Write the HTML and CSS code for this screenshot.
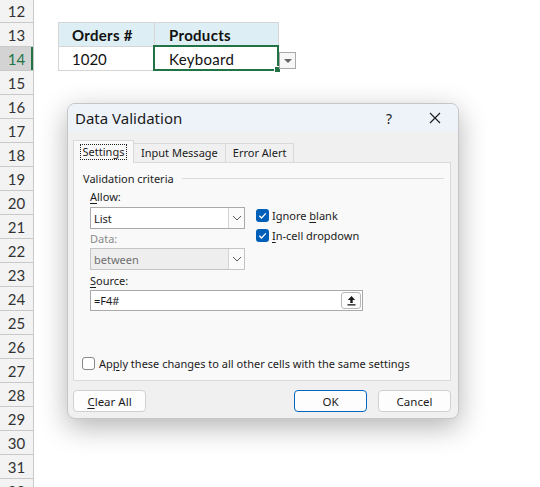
FILE: index.html
```html
<!DOCTYPE html>
<html>
<head>
<meta charset="utf-8">
<link rel="stylesheet" href="styles.css">
</head>
<body>
<div class="sheet">
  <div class="rowhdrs">
    <div class="rh first">12</div>
    <div class="rh">13</div>
    <div class="rh sel">14</div>
    <div class="rh">15</div>
    <div class="rh">16</div>
    <div class="rh">17</div>
    <div class="rh">18</div>
    <div class="rh">19</div>
    <div class="rh">20</div>
    <div class="rh">21</div>
    <div class="rh">22</div>
    <div class="rh">23</div>
    <div class="rh">24</div>
    <div class="rh">25</div>
    <div class="rh">26</div>
    <div class="rh">27</div>
    <div class="rh">28</div>
    <div class="rh">29</div>
    <div class="rh">30</div>
    <div class="rh">31</div>
    <div class="rh">32</div>
  </div>
  <div class="cells">
    <div class="tbl">
      <div class="c hd c1">Orders #</div>
      <div class="c hd c2">Products</div>
      <div class="c c1">1020</div>
      <div class="c c2">Keyboard</div>
      <div class="selbox"><span class="handle"></span></div>
      <div class="ddbtn"><span class="tri"></span></div>
    </div>
  </div>

  <div class="dlg">
    <div class="titlebar">
      <span class="title">Data Validation</span>
      <span class="tbtn">?</span>
      <span class="tbtn">
        <svg width="12" height="12" viewBox="0 0 12 12"><path d="M1 1L11 11M11 1L1 11" stroke="#1a1a1a" stroke-width="1.1" fill="none"/></svg>
      </span>
    </div>
    <div class="content">
      <div class="tabs">
        <div class="tab active"><span class="focus">Settings</span></div>
        <div class="tab">Input Message</div>
        <div class="tab">Error Alert</div>
      </div>
      <div class="panel">
        <div class="legend"><span>Validation criteria</span><span class="rule"></span></div>
        <div class="crit">
          <div class="row1">
            <div class="colL">
              <div class="lbl"><u>A</u>llow:</div>
              <div class="select">
                <span class="val">List</span>
                <span class="arrow"><svg width="10" height="6" viewBox="0 0 10 6"><path d="M1 1L5 5L9 1" stroke="#5a5a5a" fill="none" stroke-width="1"/></svg></span>
              </div>
              <div class="lbl dis">Data:</div>
              <div class="select disabled">
                <span class="val">between</span>
                <span class="arrow"><svg width="10" height="6" viewBox="0 0 10 6"><path d="M1 1L5 5L9 1" stroke="#5a5a5a" fill="none" stroke-width="1"/></svg></span>
              </div>
            </div>
            <div class="colR">
              <div class="chk"><span class="cb on"><svg width="13" height="13" viewBox="0 0 13 13"><path d="M3.3 6.8L5.5 9L9.8 4.4" stroke="#fff" stroke-width="1.3" fill="none"/></svg></span><span>Ignore <u>b</u>lank</span></div>
              <div class="chk"><span class="cb on"><svg width="13" height="13" viewBox="0 0 13 13"><path d="M3.3 6.8L5.5 9L9.8 4.4" stroke="#fff" stroke-width="1.3" fill="none"/></svg></span><span><u>I</u>n-cell dropdown</span></div>
            </div>
          </div>
          <div class="lbl src"><u>S</u>ource:</div>
          <div class="input">
            <span class="val">=F4#</span>
            <span class="upbtn"><svg width="11" height="11" viewBox="0 0 11 11"><path d="M5.5 1L1.8 5H4.3V8H6.7V5H9.2Z" fill="#1a1a1a"/><rect x="1.5" y="9.2" width="8" height="1.3" fill="#1a1a1a"/></svg></span>
          </div>
        </div>
        <div class="apply"><span class="cb off"></span><span>Ap<u>p</u>ly these changes to all other cells with the same settings</span></div>
      </div>
      <div class="buttons">
        <div class="btn"><u>C</u>lear All</div>
        <div class="right">
          <div class="btn ok">OK</div>
          <div class="btn">Cancel</div>
        </div>
      </div>
    </div>
  </div>
</div>
</body>
</html>
```

FILE: styles.css
```css
html, body {
  margin: 0;
  padding: 0;
  background: #ffffff;
}

.sheet {
  position: relative;
  width: 540px;
  height: 487px;
  display: flex;
  overflow: hidden;
  font-family: Lato, "Liberation Sans", sans-serif;
}

.rowhdrs {
  width: 34px;
  flex: none;
  box-sizing: border-box;
  background: #f3f3f3;
  border-right: 1px solid #c8c8c8;
  display: flex;
  flex-direction: column;
}

.rh {
  height: 24px;
  flex: none;
  box-sizing: border-box;
  border-bottom: 1px solid #c8c8c8;
  display: flex;
  align-items: center;
  justify-content: center;
  font-size: 15px;
  color: #333333;
}

.rh.first {
  height: 23px;
}

.rh.sel {
  background: #d3d3d3;
  color: #217346;
  box-shadow: inset -2px 0 0 #217346;
}

.cells {
  flex: 1;
  padding: 22px 0 0 24px;
}

.tbl {
  position: relative;
  display: grid;
  grid-template-columns: 95px 123px;
  grid-auto-rows: 23px;
  gap: 1px;
  padding: 1px;
  background: #d6d6d6;
  width: max-content;
}

.c {
  background: #ffffff;
  display: flex;
  align-items: center;
  font-size: 15px;
  color: #111111;
}

.c.c1 {
  padding-left: 13px;
}

.c.c2 {
  padding-left: 14px;
  letter-spacing: 0.3px;
}

.c.hd {
  background: #ddeff5;
  font-weight: bold;
  letter-spacing: 0.3px;
}

.selbox {
  position: absolute;
  left: 95px;
  top: 23px;
  width: 126px;
  height: 26px;
  box-sizing: border-box;
  border: 2px solid #217346;
}

.handle {
  position: absolute;
  right: -4px;
  bottom: -4px;
  width: 5px;
  height: 5px;
  background: #217346;
  border: 1px solid #ffffff;
}

.ddbtn {
  position: absolute;
  left: 221px;
  top: 30px;
  width: 17px;
  height: 17px;
  box-sizing: border-box;
  border: 1px solid #aaaaaa;
  background: #f7f7f7;
  display: flex;
  align-items: center;
  justify-content: center;
}

.tri {
  width: 0;
  height: 0;
  border-left: 4px solid transparent;
  border-right: 4px solid transparent;
  border-top: 4px solid #666666;
}

/* dialog */
.dlg {
  position: absolute;
  left: 67px;
  top: 103px;
  width: 392px;
  height: 316px;
  box-sizing: border-box;
  background: #f0f0f0;
  border: 1px solid #c6c6c6;
  border-radius: 8px;
  box-shadow: 0 8px 28px rgba(0, 0, 0, 0.3);
  overflow: hidden;
  display: flex;
  flex-direction: column;
  font-family: "Noto Sans", "Open Sans", sans-serif;
  font-size: 11px;
  color: #1b1b1b;
}

.titlebar {
  height: 28px;
  flex: none;
  background: #eef3fa;
  display: flex;
  align-items: center;
  padding-left: 7px;
}

.title {
  flex: 1;
  font-size: 15px;
  color: #1a1a1a;
}

.tbtn {
  width: 46px;
  height: 28px;
  display: flex;
  align-items: center;
  justify-content: center;
  font-size: 14px;
}

.content {
  padding: 8px 7px 0 5px;
}

.tabs {
  height: 22px;
  display: flex;
  align-items: flex-end;
}

.tab {
  height: 19px;
  box-sizing: border-box;
  padding: 0 7px;
  border: 1px solid #d9d9d9;
  border-bottom: none;
  border-left: none;
  background: #f0f0f0;
  display: flex;
  align-items: center;
  line-height: 14px;
}

.tab.active {
  height: 23px;
  margin-bottom: -1px;
  padding: 0 2px;
  border-left: 1px solid #d9d9d9;
  background: #f9f9f9;
  position: relative;
  z-index: 1;
  width: 61px;
  justify-content: center;
}

.focus {
  outline: 1px dotted #222222;
  padding: 0 2px;
}

.panel {
  height: 219px;
  box-sizing: border-box;
  background: #f9f9f9;
  border: 1px solid #dadada;
  display: flex;
  flex-direction: column;
}

.legend {
  display: flex;
  align-items: center;
  margin-top: 7px;
  padding-left: 9px;
  padding-right: 6px;
  height: 16px;
}

.rule {
  flex: 1;
  height: 1px;
  background: #dcdcdc;
  margin-left: 8px;
}

.crit {
  padding-left: 16px;
  margin-top: 3px;
}

.row1 {
  display: flex;
  gap: 11px;
}

.colL {
  width: 155px;
}

.lbl {
  height: 16px;
  line-height: 16px;
}

.lbl.dis {
  color: #8a8a8a;
  margin-top: 2px;
}

.select {
  height: 22px;
  margin-top: 2px;
  box-sizing: border-box;
  border: 1px solid #a9a9a9;
  background: #ffffff;
  display: flex;
  align-items: center;
}

.select.disabled {
  background: #eeeeee;
  border-color: #c4c4c4;
  color: #6e6e6e;
  margin-top: 1px;
}

.val {
  flex: 1;
  padding-left: 3px;
}

.arrow {
  width: 16px;
  height: 20px;
  box-sizing: border-box;
  border-left: 1px solid #d4d4d4;
  background: #fbfbfb;
  display: flex;
  align-items: center;
  justify-content: center;
}

.colR {
  padding-top: 16px;
}

.chk {
  height: 20px;
  display: flex;
  align-items: center;
  gap: 3px;
}

.cb {
  width: 13px;
  height: 13px;
  box-sizing: border-box;
  border-radius: 3px;
  flex: none;
  display: flex;
}

.cb.on {
  background: #005fb8;
}

.cb.off {
  background: #ffffff;
  border: 1px solid #888888;
}

.lbl.src {
  margin-top: 3px;
}

.input {
  width: 273px;
  height: 21px;
  margin-top: 1px;
  box-sizing: border-box;
  border: 1px solid #a9a9a9;
  background: #ffffff;
  display: flex;
  align-items: center;
  padding-right: 1px;
}

.upbtn {
  width: 20px;
  height: 17px;
  box-sizing: border-box;
  border: 1px solid #b8b8b8;
  border-radius: 3px;
  background: #fdfdfd;
  display: flex;
  align-items: center;
  justify-content: center;
}

.apply {
  margin-top: auto;
  margin-bottom: 9px;
  padding-left: 8px;
  height: 16px;
  display: flex;
  align-items: center;
  gap: 4px;
}

.buttons {
  margin-top: 9px;
  display: flex;
  justify-content: space-between;
}

.right {
  display: flex;
  gap: 11px;
}

.btn {
  width: 73px;
  height: 22px;
  box-sizing: border-box;
  border: 1px solid #d0d0d0;
  border-radius: 4px;
  background: #fdfdfd;
  display: flex;
  align-items: center;
  justify-content: center;
  font-size: 11.5px;
}

.btn.ok {
  border-color: #0067c0;
}

u {
  text-decoration-thickness: 1px;
  text-underline-offset: 2px;
}
```
